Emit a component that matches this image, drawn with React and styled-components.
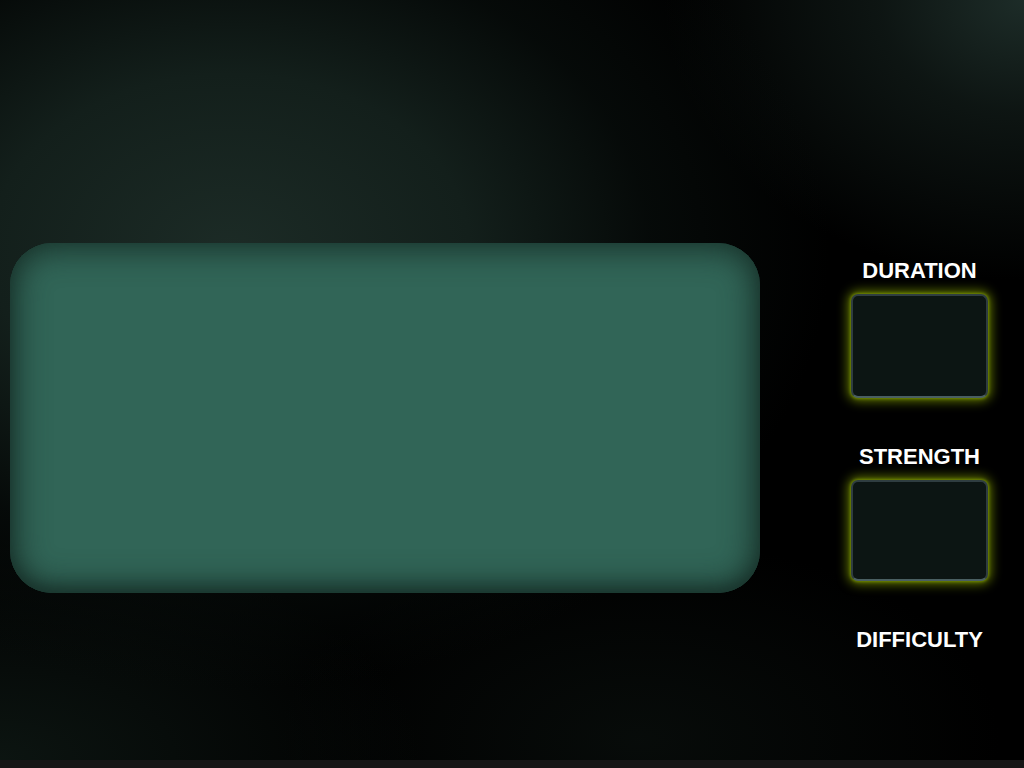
import React from 'react';
import styled, { createGlobalStyle } from 'styled-components';

const GlobalStyle = createGlobalStyle`
  html, body {
    margin: 0;
    padding: 0;
    background: #161616;
  }
  body {
    font-family: "Liberation Sans", Arial, sans-serif;
  }
`;

const Screen = styled.div`
  height: 760px;
  display: flex;
  align-items: flex-start;
  padding: 243px 36px 0 10px;
  box-sizing: border-box;
  gap: 91px;
  background:
    radial-gradient(ellipse 600px 440px at 230px 250px, #1c2b26 0%, #131f1b 40%, rgba(8, 14, 12, 0.7) 70%, rgba(0, 0, 0, 0) 100%),
    radial-gradient(ellipse 360px 280px at 1024px 0px, #1d2c28 0%, rgba(18, 28, 25, 0.75) 40%, rgba(0, 0, 0, 0) 100%),
    radial-gradient(ellipse 420px 220px at 0px 760px, rgba(14, 24, 20, 0.85) 0%, rgba(0, 0, 0, 0) 100%),
    radial-gradient(ellipse 360px 200px at 640px 740px, rgba(12, 19, 16, 0.6) 0%, rgba(0, 0, 0, 0) 100%),
    #000;
`;

const Display = styled.div`
  width: 750px;
  height: 350px;
  flex-shrink: 0;
  border-radius: 42px;
  background: #316557;
  box-shadow: inset 0 0 30px 8px rgba(22, 46, 39, 0.85), inset 0 -6px 12px rgba(20, 42, 36, 0.5);
`;

const Sidebar = styled.div`
  width: 137px;
  display: flex;
  flex-direction: column;
  align-items: center;
  margin-top: 15px;
`;

const Label = styled.div`
  color: #ffffff;
  font-weight: bold;
  font-size: 22px;
  line-height: 26px;
  text-align: center;
  white-space: nowrap;
`;

const Readout = styled.div`
  width: 137px;
  height: ${(p) => p.$h}px;
  box-sizing: border-box;
  margin: 10px 0 46px;
  border: 2px solid #2f3d40;
  border-bottom-color: #4a5f62;
  border-radius: 7px;
  background: #0c1513;
  box-shadow: 0 0 11px 3px rgba(140, 170, 0, 0.7), 0 0 3px 1px rgba(150, 180, 0, 0.6);
`;

const stats = [
  { name: 'DURATION', h: 104 },
  { name: 'STRENGTH', h: 101 },
  { name: 'DIFFICULTY', h: 0 },
];

export default function App() {
  return (
    <>
      <GlobalStyle />
      <Screen>
        <Display />
        <Sidebar>
          {stats.map((s) => (
            <React.Fragment key={s.name}>
              <Label>{s.name}</Label>
              {s.h > 0 && <Readout $h={s.h} />}
            </React.Fragment>
          ))}
        </Sidebar>
      </Screen>
    </>
  );
}
